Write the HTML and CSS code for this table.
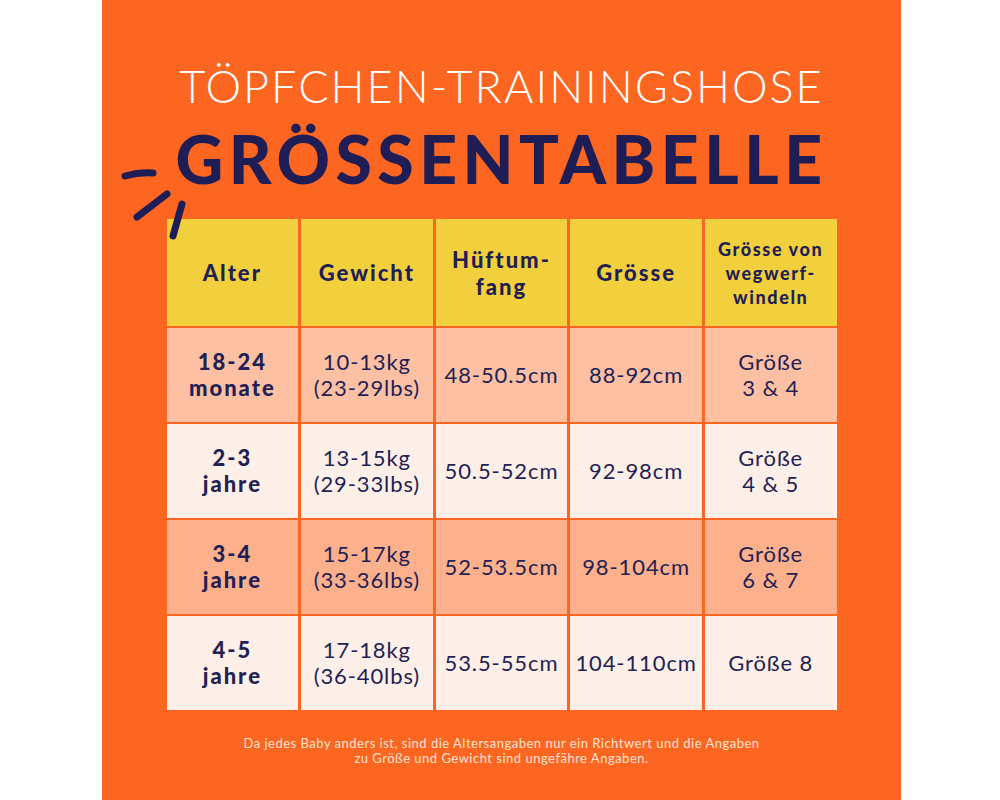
FILE: index.html
```html
<!DOCTYPE html>
<html lang="de">
<head>
<meta charset="utf-8">
<title>Töpfchen-Trainingshose Grössentabelle</title>
<link rel="stylesheet" href="styles.css">
</head>
<body>
<main class="panel">
  <svg class="sparks" width="80" height="100" viewBox="0 0 80 100" aria-hidden="true">
    <path d="M6 28 Q20 24 34 25" />
    <path d="M18 69 L48 46" />
    <path d="M54 88 L63 56" />
  </svg>
  <header class="heading">
    <h2 class="kicker">TÖPFCHEN-TRAININGSHOSE</h2>
    <h1 class="title">GRÖSSENTABELLE</h1>
  </header>
  <section class="chart">
    <div class="cell head">Alter</div>
    <div class="cell head">Gewicht</div>
    <div class="cell head">Hüftum-<br>fang</div>
    <div class="cell head">Grösse</div>
    <div class="cell head small">Grösse von<br>wegwerf-<br>windeln</div>

    <div class="cell row-a age">18-24<br>monate</div>
    <div class="cell row-a">10-13kg<br>(23-29lbs)</div>
    <div class="cell row-a">48-50.5cm</div>
    <div class="cell row-a">88-92cm</div>
    <div class="cell row-a">Größe<br>3 &amp; 4</div>

    <div class="cell row-b age">2-3<br>jahre</div>
    <div class="cell row-b">13-15kg<br>(29-33lbs)</div>
    <div class="cell row-b">50.5-52cm</div>
    <div class="cell row-b">92-98cm</div>
    <div class="cell row-b">Größe<br>4 &amp; 5</div>

    <div class="cell row-c age">3-4<br>jahre</div>
    <div class="cell row-c">15-17kg<br>(33-36lbs)</div>
    <div class="cell row-c">52-53.5cm</div>
    <div class="cell row-c">98-104cm</div>
    <div class="cell row-c">Größe<br>6 &amp; 7</div>

    <div class="cell row-b age">4-5<br>jahre</div>
    <div class="cell row-b">17-18kg<br>(36-40lbs)</div>
    <div class="cell row-b">53.5-55cm</div>
    <div class="cell row-b">104-110cm</div>
    <div class="cell row-b">Größe 8</div>
  </section>
  <p class="note">Da jedes Baby anders ist, sind die Altersangaben nur ein Richtwert und die Angaben<br>zu Größe und Gewicht sind ungefähre Angaben.</p>
</main>
</body>
</html>
```
FILE: styles.css
```css
html, body {
  margin: 0;
  padding: 0;
  background: #ffffff;
}
body {
  font-family: "Lato", "Inter", sans-serif;
  color: #221f55;
}
.panel {
  position: relative;
  box-sizing: border-box;
  width: 799px;
  height: 800px;
  margin-left: 102px;
  background: #fd6620;
  padding-top: 60px;
  display: flex;
  flex-direction: column;
  align-items: center;
}
.sparks {
  position: absolute;
  left: 17px;
  top: 148px;
  overflow: visible;
}
.sparks path {
  fill: none;
  stroke: #1f1d55;
  stroke-width: 7;
  stroke-linecap: round;
}
.heading {
  text-align: center;
}
.kicker {
  margin: 0;
  font-family: "Lato", sans-serif;
  font-weight: 300;
  font-size: 45px;
  line-height: 52px;
  letter-spacing: 2px;
  color: #ffffff;
}
.title {
  margin: 11px 0 0;
  font-family: "Lato", sans-serif;
  font-weight: 900;
  font-size: 66px;
  line-height: 72px;
  letter-spacing: 5.5px;
  color: #1f1d55;
}
.chart {
  margin-top: 24px;
  width: 670px;
  display: grid;
  grid-template-columns: repeat(5, 1fr);
  grid-template-rows: 107px repeat(4, 94px);
  column-gap: 3px;
  row-gap: 2px;
}
.cell {
  display: flex;
  align-items: center;
  justify-content: center;
  text-align: center;
  font-size: 22px;
  line-height: 26px;
  letter-spacing: 0.9px;
  font-weight: 400;
}
.head {
  background: #f2cf3c;
  font-weight: 900;
  font-size: 22px;
  line-height: 27px;
  letter-spacing: 2px;
}
.head.small {
  font-size: 18px;
  line-height: 24px;
  letter-spacing: 1.6px;
}
.age {
  font-weight: 900;
  letter-spacing: 2px;
}
.row-a { background: #fdc0a3; }
.row-b { background: #fef0e8; }
.row-c { background: #fcb08c; }
.note {
  margin: 26px 0 0;
  text-align: center;
  font-size: 13px;
  line-height: 15px;
  letter-spacing: 0.5px;
  color: #fde3d3;
}
```
